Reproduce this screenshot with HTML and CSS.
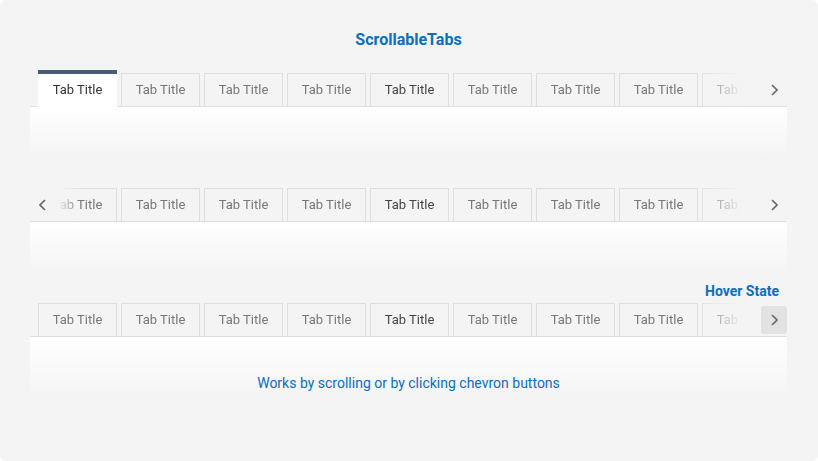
FILE: index.html
```html
<!DOCTYPE html>
<html lang="en">
<head>
  <meta charset="UTF-8" />
  <meta name="viewport" content="width=device-width, initial-scale=1.0"/>
  <title>ScrollableTabs</title>
  <link rel="stylesheet" href="styles.css">
</head>
<body>
  <div class="frame">
    <h1 class="title">ScrollableTabs</h1>

    <!-- start position -->
    <div class="demo">
      <div class="tabbar">
        <div class="tab-list fade-right">
          <div class="tab active">Tab Title</div>
          <div class="tab">Tab Title</div>
          <div class="tab">Tab Title</div>
          <div class="tab">Tab Title</div>
          <div class="tab strong">Tab Title</div>
          <div class="tab">Tab Title</div>
          <div class="tab">Tab Title</div>
          <div class="tab">Tab Title</div>
          <div class="tab">Tab Title</div>
          <div class="tab">Tab Title</div>
        </div>
        <button class="scroll-btn">
          <svg width="8" height="12" viewBox="0 0 8 12"><polyline points="2,1 7,6 2,11" /></svg>
        </button>
      </div>
      <div class="panel"></div>
    </div>

    <!-- scrolled -->
    <div class="demo">
      <div class="tabbar">
        <div class="tab-list fade-both">
          <div class="tab">Tab Title</div>
          <div class="tab">Tab Title</div>
          <div class="tab">Tab Title</div>
          <div class="tab">Tab Title</div>
          <div class="tab strong">Tab Title</div>
          <div class="tab">Tab Title</div>
          <div class="tab">Tab Title</div>
          <div class="tab">Tab Title</div>
          <div class="tab">Tab Title</div>
          <div class="tab">Tab Title</div>
        </div>
        <button class="scroll-btn prev">
          <svg width="8" height="12" viewBox="0 0 8 12"><polyline points="6,1 1,6 6,11" /></svg>
        </button>
        <button class="scroll-btn">
          <svg width="8" height="12" viewBox="0 0 8 12"><polyline points="2,1 7,6 2,11" /></svg>
        </button>
      </div>
      <div class="panel"></div>
    </div>

    <!-- hover -->
    <div class="demo hover-demo">
      <div class="demo-label">Hover State</div>
      <div class="tabbar">
        <div class="tab-list fade-right">
          <div class="tab">Tab Title</div>
          <div class="tab">Tab Title</div>
          <div class="tab">Tab Title</div>
          <div class="tab">Tab Title</div>
          <div class="tab strong">Tab Title</div>
          <div class="tab">Tab Title</div>
          <div class="tab">Tab Title</div>
          <div class="tab">Tab Title</div>
          <div class="tab">Tab Title</div>
          <div class="tab">Tab Title</div>
        </div>
        <button class="scroll-btn hover">
          <svg width="8" height="12" viewBox="0 0 8 12"><polyline points="2,1 7,6 2,11" /></svg>
        </button>
      </div>
      <div class="panel tall">
        <p class="note">Works by scrolling or by clicking chevron buttons</p>
      </div>
    </div>
  </div>
</body>
</html>
```

FILE: styles.css
```css
body { margin: 0; background: #fff; font-family: Roboto, "Liberation Sans", Arial, sans-serif; }
.frame {
  height: 461px;
  box-sizing: border-box;
  padding: 30px 31px 0 30px;
  background: #f4f4f4;
  border-radius: 6px;
}
.title {
  margin: 0 0 19px;
  font-size: 16px;
  line-height: 20px;
  font-weight: bold;
  text-align: center;
  color: #0a6ebd;
}
.demo + .demo { margin-top: 27px; }
.demo.hover-demo { margin-top: 11px; }
.demo-label {
  padding-right: 8px;
  font-size: 14px;
  line-height: 16px;
  font-weight: bold;
  text-align: right;
  color: #0a6ebd;
}

/* tab strip */
.tabbar {
  position: relative;
  display: flex;
  height: 37px;
  border-bottom: 1px solid #dedede;
}
.tab-list {
  flex: 1;
  display: flex;
  align-items: flex-end;
  gap: 4px;
  padding: 0 0 1px 8px;
  margin-bottom: -1px;
  overflow: hidden;
}
.fade-right {
  -webkit-mask-image: linear-gradient(to right, #000 calc(100% - 64px), transparent calc(100% - 18px));
  mask-image: linear-gradient(to right, #000 calc(100% - 64px), transparent calc(100% - 18px));
}
.fade-both {
  -webkit-mask-image: linear-gradient(to right, transparent 28px, #000 50px, #000 calc(100% - 64px), transparent calc(100% - 18px));
  mask-image: linear-gradient(to right, transparent 28px, #000 50px, #000 calc(100% - 64px), transparent calc(100% - 18px));
}
.tab {
  flex: none;
  box-sizing: border-box;
  width: 79px;
  height: 33px;
  border: 1px solid #dedede;
  border-bottom: none;
  background: #f4f4f4;
  color: #777;
  font-size: 13px;
  line-height: 31px;
  text-align: center;
  white-space: nowrap;
}
.tab.strong { color: #444; }
.tab.active {
  height: 37px;
  margin-bottom: -1px;
  border: none;
  border-top: 4px solid #4a5a78;
  background: #fff;
  color: #333;
  line-height: 32px;
}

/* chevrons */
.scroll-btn {
  flex: none;
  align-self: flex-end;
  width: 26px;
  height: 28px;
  margin-bottom: 2px;
  padding: 0;
  border: none;
  border-radius: 3px;
  background: transparent;
  display: flex;
  align-items: center;
  justify-content: center;
  cursor: pointer;
}
.scroll-btn svg { fill: none; stroke: #666; stroke-width: 1.6; }
.scroll-btn.prev { position: absolute; left: 0; bottom: 0; }
.scroll-btn.hover { background: #e2e2e2; }

.panel {
  height: 50px;
  background: linear-gradient(#fff, #f4f4f4);
}
.panel.tall { height: 60px; }
.note {
  margin: 0;
  padding-top: 38px;
  font-size: 14px;
  line-height: 16px;
  text-align: center;
  color: #0a6ebd;
}
```
